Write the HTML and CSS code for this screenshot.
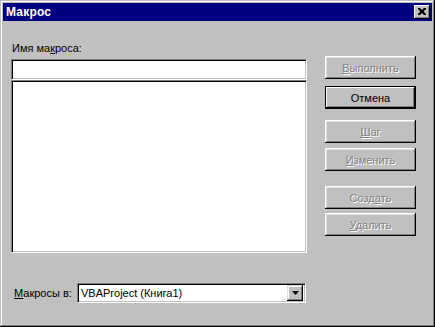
FILE: index.html
```html
<!DOCTYPE html>
<html lang="ru">
<head>
<meta charset="utf-8">
<title>Макрос</title>
<link rel="stylesheet" href="styles.css">
</head>
<body>
<div class="window">
  <div class="titlebar">
    <span class="title">Макрос</span>
    <button class="close" aria-label="Закрыть">
      <svg width="8" height="7" viewBox="0 0 8 7"><path d="M0 0h2l2 2 2-2h2v1L6 3v1l2 2v1H6L4 5 2 7H0V6l2-2V3L0 1z" fill="#000"/></svg>
    </button>
  </div>
  <div class="content">
    <div class="main">
      <div class="left">
        <div class="label">Имя ма<u>к</u>роса:</div>
        <div class="field input"></div>
        <div class="field list"></div>
      </div>
      <div class="right">
        <button class="btn disabled b1"><u>В</u>ыполнить</button>
        <button class="btn default b2">Отмена</button>
        <button class="btn disabled b3"><u>Ш</u>аг</button>
        <button class="btn disabled b4"><u>И</u>зменить</button>
        <button class="btn disabled b5">Созд<u>а</u>ть</button>
        <button class="btn disabled b6"><u>У</u>далить</button>
      </div>
    </div>
    <div class="bottom">
      <span class="label2"><u>М</u>акросы в:</span>
      <div class="field combo">
        <span class="combo-text">VBAProject (Книга1)</span>
        <span class="drop"><svg width="7" height="4" viewBox="0 0 7 4"><path d="M0 0h7L3.5 4z" fill="#000"/></svg></span>
      </div>
    </div>
  </div>
</div>
</body>
</html>
```
FILE: styles.css
```css
* { box-sizing: border-box; }
html, body { margin: 0; padding: 0; background: #c0c0c0; }
body { font-family: "Liberation Sans", Arial, sans-serif; font-size: 11px; color: #000; }
u { text-decoration: underline; text-underline-offset: 1px; }

.window {
  width: 435px; height: 327px;
  background: #c0c0c0;
  padding: 3px;
  box-shadow: inset -1px -1px #000, inset 1px 1px #c0c0c0, inset -2px -2px #808080, inset 2px 2px #fff;
}
.titlebar {
  height: 18px;
  background: #000080;
  display: flex; align-items: center; justify-content: space-between;
  padding: 0 2px 0 3px;
}
.title { color: #fff; font-weight: bold; font-size: 12px; letter-spacing: 0.2px; }
.close {
  width: 16px; height: 14px; padding: 0; border: 0;
  background: #c0c0c0;
  box-shadow: inset -1px -1px #000, inset 1px 1px #fff, inset -2px -2px #808080;
  display: flex; align-items: center; justify-content: center;
}
.close svg { display: block; margin: 0 0 1px 0; }

.content { padding: 0; }
.main { display: flex; }
.left { margin-left: 8px; width: 296px; padding-top: 21px; }
.label { height: 13px; line-height: 13px; margin-bottom: 4px; padding-left: 1px; }
.field {
  background: #fff;
  border: 1px solid; border-color: #808080 #fff #fff #808080;
  box-shadow: inset 1px 1px #000, inset -1px -1px #c0c0c0;
}
.input { height: 21px; }
.list { height: 173px; }

.right { margin-left: 18px; width: 91px; display: flex; flex-direction: column; padding-top: 35px; }
.btn {
  width: 91px; height: 23px; padding: 0;
  font-family: "Liberation Sans", Arial, sans-serif; font-size: 11px;
  background: #c0c0c0; color: #000;
  border: 0;
  box-shadow: inset -1px -1px #000, inset 1px 1px #fff, inset -2px -2px #808080, inset 2px 2px #dfdfdf;
}
.btn.disabled { color: #808080; text-shadow: 1px 1px #fff; }
.btn.default {
  box-shadow: inset 0 0 0 1px #000, inset -2px -2px #000, inset 2px 2px #fff, inset -3px -3px #808080;
}
.b2 { margin-top: 7px; }
.b3 { margin-top: 11px; }
.b4 { margin-top: 5px; }
.b5 { margin-top: 15px; }
.b6 { margin-top: 4px; }

.bottom { display: flex; align-items: center; margin-top: 30px; margin-left: 11px; }
.label2 { width: 63px; }
.combo { width: 229px; height: 20px; display: flex; align-items: center; justify-content: space-between; padding: 0 2px 0 3px; }
.combo-text { line-height: 13px; }
.drop {
  width: 16px; height: 16px; background: #c0c0c0;
  box-shadow: inset -1px -1px #000, inset 1px 1px #dfdfdf, inset -2px -2px #808080, inset 2px 2px #fff;
  display: flex; align-items: center; justify-content: center;
}
.drop svg { display: block; }
```
